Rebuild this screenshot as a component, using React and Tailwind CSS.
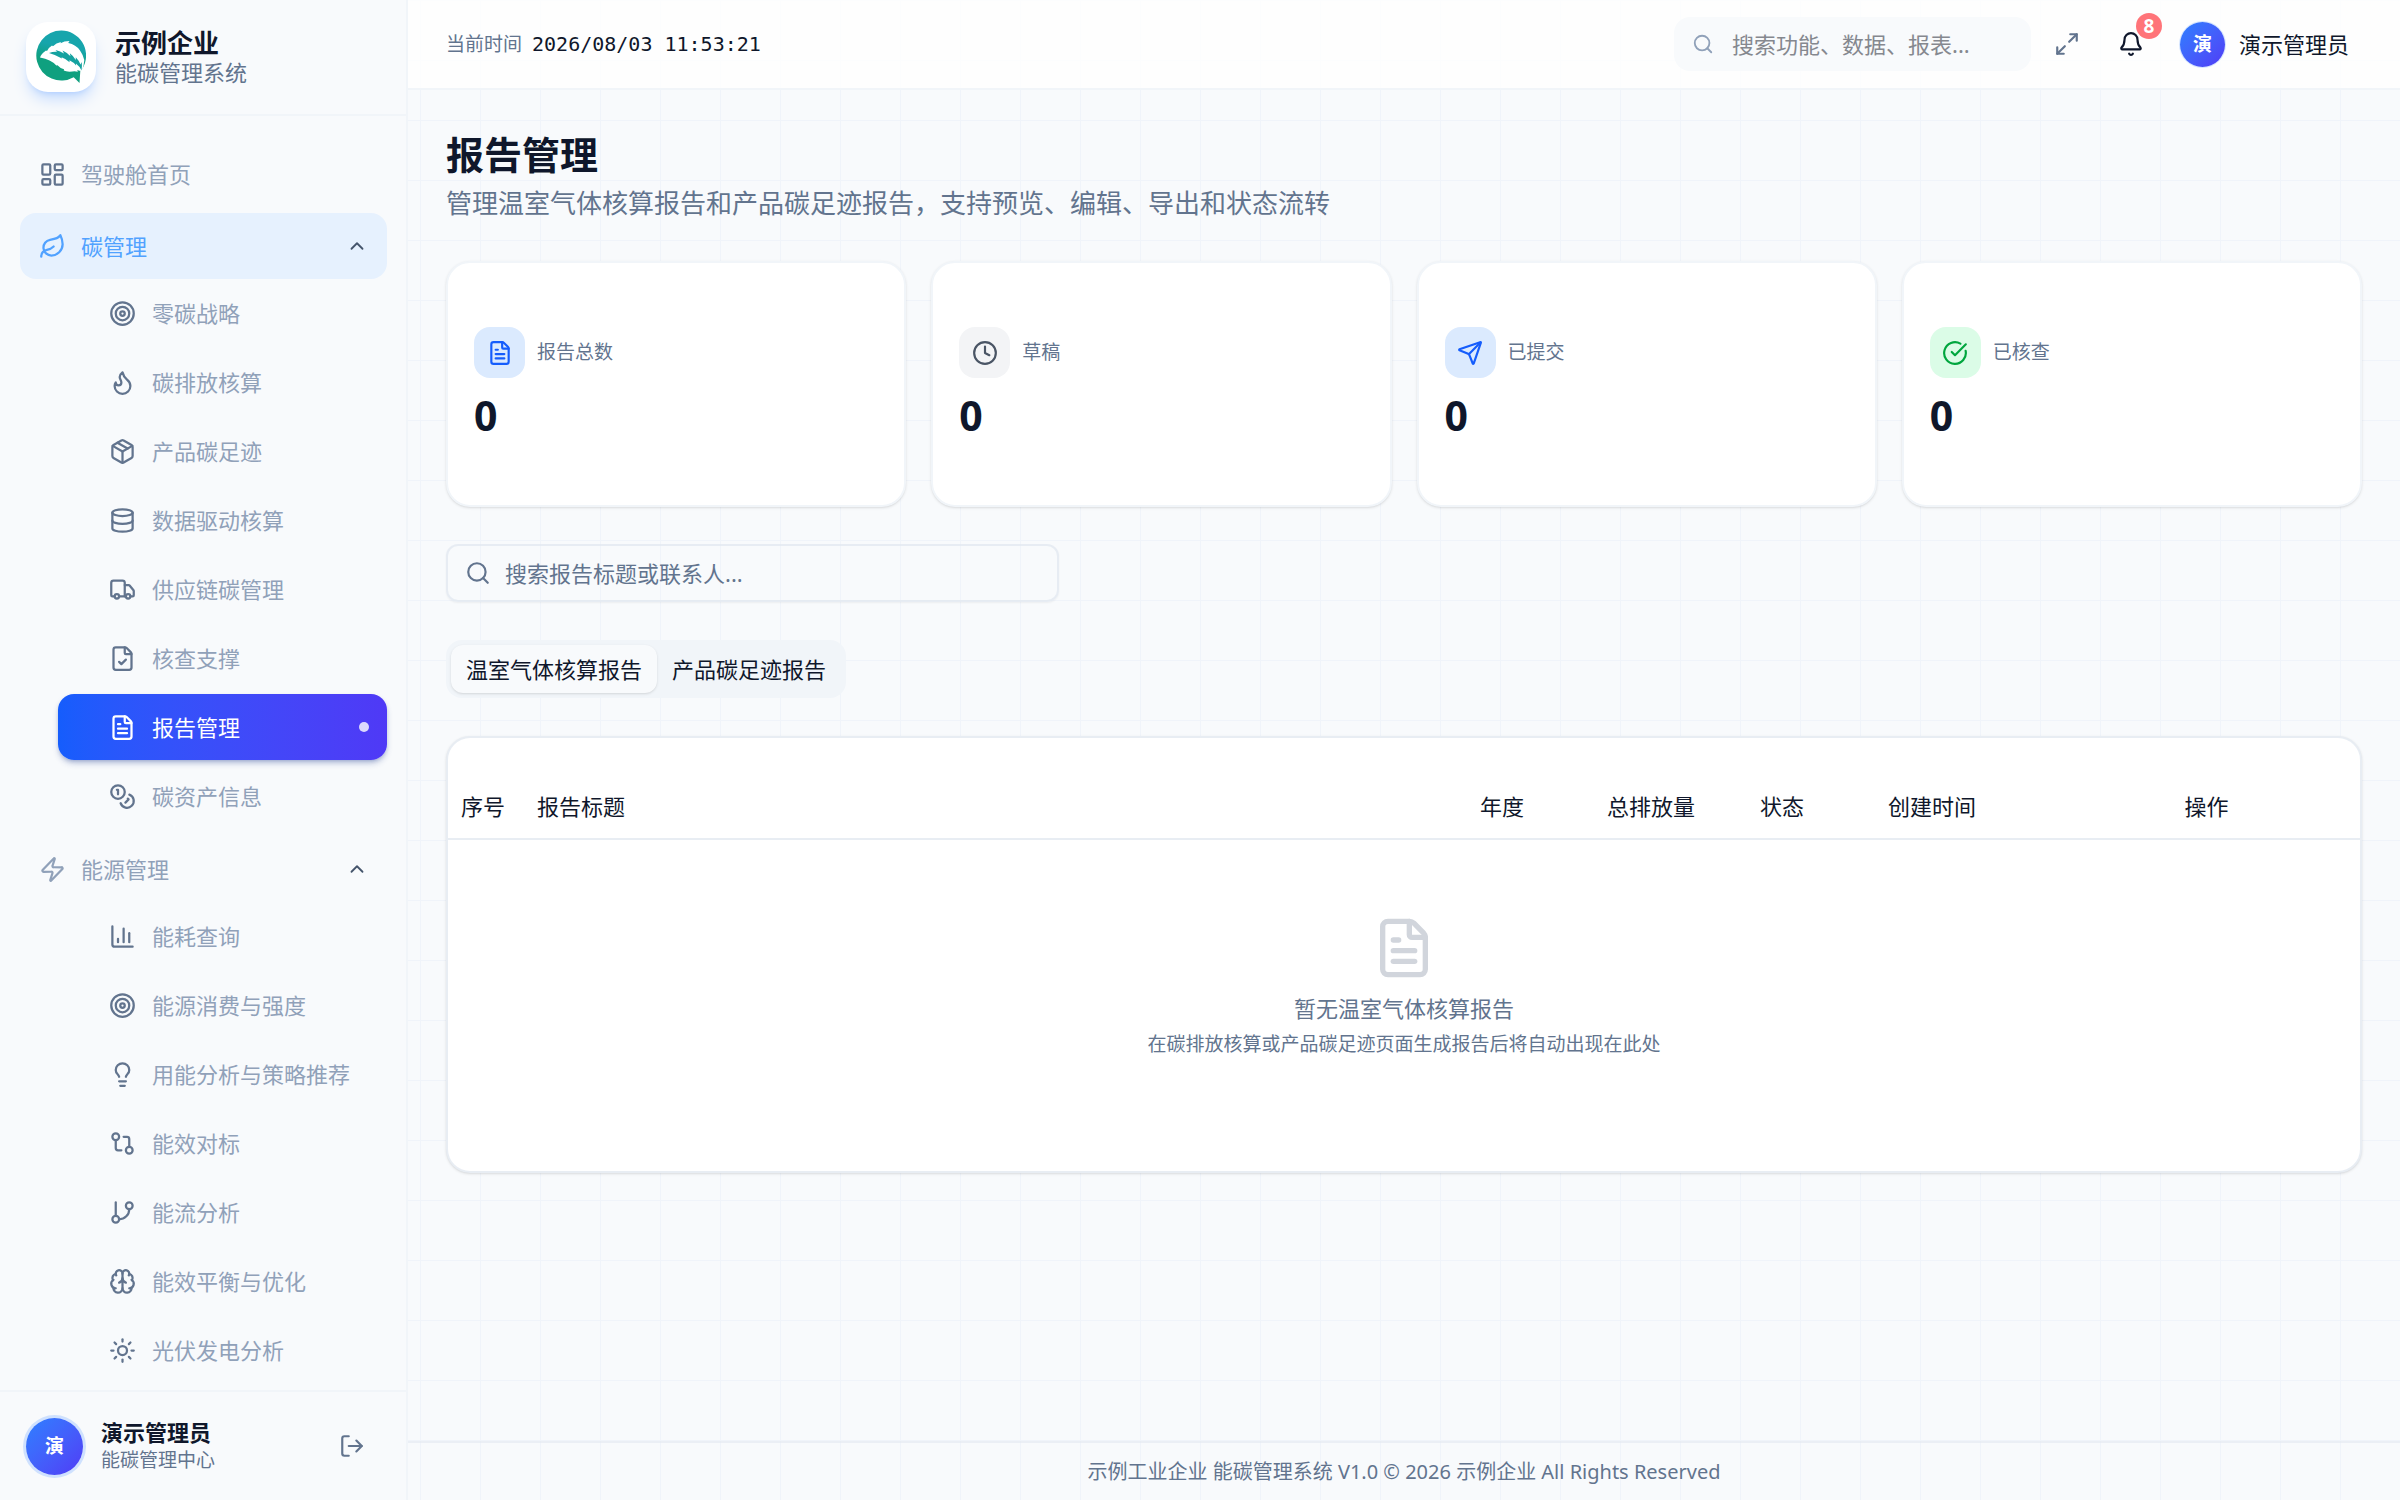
import React from "react";
import {
  BarChart3,
  Bell,
  Brain,
  ChevronUp,
  CircleCheckBig,
  Clock,
  Coins,
  Database,
  FileCheck,
  FileText,
  Flame,
  GitBranch,
  GitCompare,
  LayoutDashboard,
  Leaf,
  Lightbulb,
  LogOut,
  Maximize2,
  Package,
  Search,
  Send,
  Sun,
  Target,
  Truck,
  Zap,
} from "lucide-react";

const menu = [
  { name: "驾驶舱首页", icon: LayoutDashboard },
  {
    name: "碳管理",
    icon: Leaf,
    open: true,
    children: [
      { name: "零碳战略", icon: Target },
      { name: "碳排放核算", icon: Flame },
      { name: "产品碳足迹", icon: Package },
      { name: "数据驱动核算", icon: Database },
      { name: "供应链碳管理", icon: Truck },
      { name: "核查支撑", icon: FileCheck },
      { name: "报告管理", icon: FileText, active: true },
      { name: "碳资产信息", icon: Coins },
    ],
  },
  {
    name: "能源管理",
    icon: Zap,
    children: [
      { name: "能耗查询", icon: BarChart3 },
      { name: "能源消费与强度", icon: Target },
      { name: "用能分析与策略推荐", icon: Lightbulb },
      { name: "能效对标", icon: GitCompare },
      { name: "能流分析", icon: GitBranch },
      { name: "能效平衡与优化", icon: Brain },
      { name: "光伏发电分析", icon: Sun },
    ],
  },
];

const stats = [
  { label: "报告总数", value: 0, icon: FileText, color: "bg-blue-100 text-blue-600" },
  { label: "草稿", value: 0, icon: Clock, color: "bg-gray-100 text-gray-600" },
  { label: "已提交", value: 0, icon: Send, color: "bg-blue-100 text-blue-600" },
  { label: "已核查", value: 0, icon: CircleCheckBig, color: "bg-green-100 text-green-600" },
];

const columns = [
  { title: "序号", width: "w-[76px]" },
  { title: "报告标题", width: "" },
  { title: "年度", width: "w-[127px]" },
  { title: "总排放量", width: "w-[153px]" },
  { title: "状态", width: "w-[128px]" },
  { title: "创建时间", width: "w-[178px]" },
  { title: "操作", width: "w-[307px]", center: true },
];

function Logo() {
  return (
    <svg viewBox="0 0 50 54" className="h-[54px] w-[50px]" aria-hidden="true">
      <defs>
        <linearGradient id="logo" x1="0.6" y1="0" x2="0.4" y2="1">
          <stop offset="0.3" stopColor="#17a5ac" />
          <stop offset="0.6" stopColor="#0fa07f" />
        </linearGradient>
      </defs>
      <path
        d="M25.500 .5a25 25 0 0 1 22.500 35c-.8 2-2.200 4-3.700 5.500L43.500 53l-5.800-5.800A25 25 0 1 1 25.500 .5z"
        fill="url(#logo)"
      />
      <path
        d="M4 27.500Q5 24 10 20.500l1 .5q1-3 5-5.500l1 .8q3-3.300 8-4.300l-.5 1.300Q28 11 33.500 11l-1.300 2Q40 14.500 44 20.500q3.500 5 4.300 9.500-.3 6-2.500 11-2.500 0-4.500-1l.5 1.700q-3-.7-5.500-.2-6 .5-8.500-1l.2-1.300q-4-1-6.500-4l-1.200.2Q15 29.500 4 27.500z"
        fill="#fff"
      />
      <path
        d="M13 23Q17 21.500 21 21.800L19.500 20Q24.500 21 28 23.500L26.500 20.500Q31 22.500 34.500 26.300L33.800 23.300Q37.500 26 39.800 30L39.800 27.200Q43 30.500 44.500 34.500l1.200-2.500q.6 4-.2 8.500-1.600-4-5.600-7l.2 2q-2.600-3.400-6.700-5.300l.2 2q-3.300-3.300-8.100-5l.5 1.200Q20 25 13 23z"
        fill="#15a2a0"
      />
    </svg>
  );
}

function MenuItem({ item }) {
  const Icon = item.icon;

  return (
    <a
      href="#"
      className={
        item.active
          ? "flex h-[66px] items-center gap-[16px] rounded-2xl bg-linear-to-r from-[#155dfc] to-[#4f39f6] pr-[18px] pl-[51px] text-white shadow-md shadow-blue-900/30"
          : "flex h-[66px] items-center gap-[16px] rounded-2xl pr-[18px] pl-[51px] text-slate-400"
      }
    >
      <Icon size={27} className={item.active ? "text-white" : "text-slate-500"} />
      <span>{item.name}</span>
      {item.active && <span className="ml-auto size-[10px] rounded-full bg-white/80" />}
    </a>
  );
}

function Sidebar() {
  return (
    <aside className="flex w-[408px] shrink-0 flex-col border-r-2 border-slate-100 bg-slate-50">
      <div className="flex h-[116px] shrink-0 items-center gap-[19px] border-b-2 border-slate-100 px-[26px]">
        <div className="flex size-[70px] items-center justify-center rounded-[22px] bg-white shadow-lg shadow-blue-500/25">
          <Logo />
        </div>
        <div>
          <h2 className="text-[26px] leading-[30px] font-bold">示例企业</h2>
          <p className="text-[22px] leading-[28px] text-slate-500">能碳管理系统</p>
        </div>
      </div>

      <nav className="min-h-0 flex-1 space-y-[6px] overflow-hidden pt-[25px] pr-[19px] pl-[20px] text-[22px]">
        {menu.map((group) => {
          const Icon = group.icon;

          if (!group.children) {
            return (
              <a
                href="#"
                key={group.name}
                className="flex h-[66px] items-center gap-[15px] rounded-2xl px-[19px] text-slate-400"
              >
                <Icon size={27} className="text-slate-500" />
                <span>{group.name}</span>
              </a>
            );
          }

          return (
            <div key={group.name}>
              <button
                type="button"
                className={
                  group.open
                    ? "flex h-[66px] w-full items-center gap-[15px] rounded-2xl bg-[#e6f1fe] px-[19px] text-[#51a2ff]"
                    : "flex h-[66px] w-full items-center gap-[15px] rounded-2xl px-[19px] text-slate-400"
                }
              >
                <Icon size={27} />
                <span>{group.name}</span>
                <ChevronUp size={22} className="ml-auto text-slate-600" />
              </button>
              <div className="space-y-[3px] py-px pl-[38px]">
                {group.children.map((item) => (
                  <MenuItem item={item} key={item.name} />
                ))}
              </div>
            </div>
          );
        })}
      </nav>

      <div className="flex h-[110px] shrink-0 items-center gap-[18px] border-t-2 border-slate-100 px-[26px]">
        <div className="flex size-[57px] items-center justify-center rounded-full bg-linear-to-br from-[#2b7fff] to-[#4f39f6] text-[19px] font-bold text-white ring-3 ring-blue-500/20">
          演
        </div>
        <div>
          <p className="text-[22px] leading-[28px] font-bold">演示管理员</p>
          <p className="text-[19px] leading-[28px] text-slate-500">能碳管理中心</p>
        </div>
        <button type="button" aria-label="退出登录" className="mr-[15px] ml-auto text-slate-500">
          <LogOut size={26} />
        </button>
      </div>
    </aside>
  );
}

function Header() {
  return (
    <header className="flex h-[90px] shrink-0 items-center border-b-2 border-slate-100 bg-white/80 px-[38px]">
      <span className="text-[19px] text-slate-500">当前时间</span>
      <time className="ml-[10px] font-['DejaVu_Sans_Mono',monospace] text-[20px]">
        2026/08/03 11:53:21
      </time>

      <label className="ml-auto flex h-[54px] w-[357px] items-center gap-[18px] rounded-2xl bg-slate-50 px-[18px]">
        <Search size={22} className="shrink-0 text-slate-400" />
        <input
          type="text"
          placeholder="搜索功能、数据、报表..."
          className="w-full min-w-0 bg-transparent text-[22px] outline-none placeholder:text-[#85888f]"
        />
      </label>
      <button type="button" aria-label="全屏" className="ml-[23px] text-slate-500">
        <Maximize2 size={26} />
      </button>
      <button type="button" aria-label="通知" className="relative ml-[38px]">
        <Bell size={26} />
        <span className="absolute -top-[18px] -right-[18px] flex size-[26px] items-center justify-center rounded-full bg-[#ff7479] text-[19px] font-bold text-white">
          8
        </span>
      </button>
      <button type="button" className="ml-[36px] flex items-center gap-[14px] pr-[13px]">
        <span className="flex size-[45px] items-center justify-center rounded-full bg-linear-to-br from-[#2b7fff] to-[#4f39f6] text-[19px] font-bold text-white ring-1 ring-blue-500/20">
          演
        </span>
        <span className="text-[22px]">演示管理员</span>
      </button>
    </header>
  );
}

function App() {
  return (
    <div className="flex h-screen bg-slate-50 bg-[linear-gradient(to_right,#f0f4fa_1px,transparent_1px),linear-gradient(to_bottom,#f0f4fa_1px,transparent_1px)] bg-[size:60px_60px] font-['Noto_Sans','Noto_Sans_CJK_SC',sans-serif] text-slate-900">
      <Sidebar />

      <div className="flex min-w-0 flex-1 flex-col">
        <Header />

        <main className="min-h-0 flex-1 px-[38px] pt-[37px]">
          <h1 className="text-[38px] leading-[54px] font-bold">报告管理</h1>
          <p className="text-[26px] leading-[44px] text-slate-500">
            管理温室气体核算报告和产品碳足迹报告，支持预览、编辑、导出和状态流转
          </p>

          <section className="mt-[36px] grid grid-cols-4 gap-[25px]">
            {stats.map(({ label, value, icon: Icon, color }) => (
              <div
                key={label}
                className="rounded-3xl border-2 border-slate-100 bg-white px-[26px] py-[64px] shadow-sm"
              >
                <div className="flex items-center gap-[12px]">
                  <span className={`flex size-[51px] items-center justify-center rounded-2xl ${color}`}>
                    <Icon size={26} />
                  </span>
                  <span className="text-[19px] text-slate-500">{label}</span>
                </div>
                <p className="mt-[12px] text-[41px] leading-[51px] font-bold">{value}</p>
              </div>
            ))}
          </section>

          <label className="mt-[37px] flex h-[58px] w-[613px] items-center gap-[14px] rounded-xl border-2 border-slate-200/80 px-[17px] shadow-xs">
            <Search size={26} className="shrink-0 text-slate-500" />
            <input
              type="text"
              placeholder="搜索报告标题或联系人..."
              className="w-full bg-transparent text-[22px] outline-none placeholder:text-slate-500"
            />
          </label>

          <div
            role="tablist"
            className="mt-[38px] flex h-[58px] w-fit items-center rounded-2xl bg-slate-100 p-[5px] text-[22px]"
          >
            <button
              type="button"
              role="tab"
              aria-selected="true"
              className="h-[48px] rounded-xl bg-slate-50 px-[15px] shadow-sm"
            >
              温室气体核算报告
            </button>
            <button type="button" role="tab" aria-selected="false" className="h-[48px] px-[15px]">
              产品碳足迹报告
            </button>
          </div>

          <section className="mt-[38px] rounded-3xl border-2 border-slate-200/80 bg-white pt-[37px] pb-[37px] shadow-sm">
            <table className="w-full table-fixed text-left text-[22px]">
              <thead>
                <tr className="h-[64px] border-b-2 border-slate-200/80">
                  {columns.map((col) => (
                    <th
                      key={col.title}
                      className={`px-[13px] font-normal ${col.width} ${col.center ? "text-center" : ""}`}
                    >
                      {col.title}
                    </th>
                  ))}
                </tr>
              </thead>
              <tbody>
                <tr>
                  <td colSpan={7} className="py-[76px] text-center text-slate-500">
                    <FileText size={64} className="mx-auto text-gray-300" />
                    <p className="mt-[12px] leading-[32px]">暂无温室气体核算报告</p>
                    <p className="mt-[6px] text-[19px] leading-[28px]">
                      在碳排放核算或产品碳足迹页面生成报告后将自动出现在此处
                    </p>
                  </td>
                </tr>
              </tbody>
            </table>
          </section>
        </main>

        <footer className="flex h-[59px] shrink-0 items-center justify-center border-t-2 border-slate-200/60 text-[20px] text-slate-500">
          示例工业企业 能碳管理系统 V1.0 © 2026 示例企业 All Rights Reserved
        </footer>
      </div>
    </div>
  );
}

export default App;
